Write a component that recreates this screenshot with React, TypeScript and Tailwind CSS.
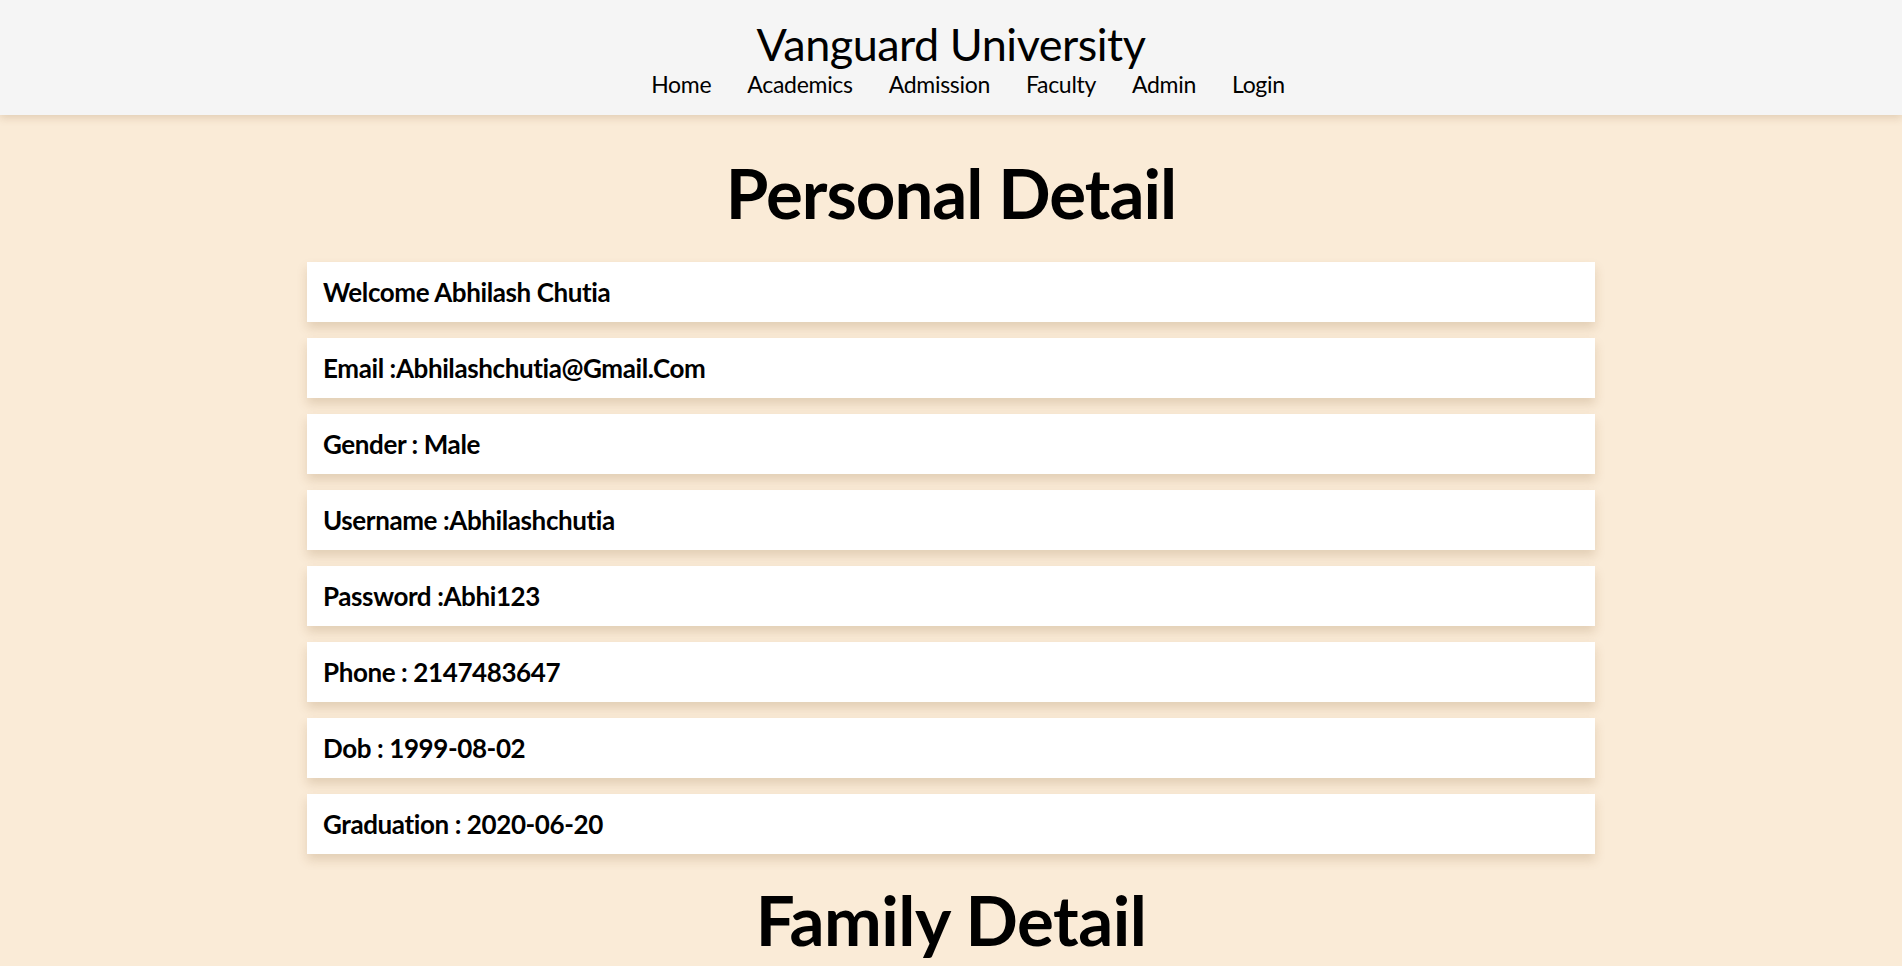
import React from "react";

const rows = [
  "Welcome Abhilash Chutia",
  "Email :Abhilashchutia@Gmail.Com",
  "Gender : Male",
  "Username :Abhilashchutia",
  "Password :Abhi123",
  "Phone : 2147483647",
  "Dob : 1999-08-02",
  "Graduation : 2020-06-20",
];

export default function App() {
  return (
    <div className="min-h-[966px] bg-[#faebd7] text-black font-['Lato','Open_Sans',sans-serif]">
      <header className="h-[115px] bg-[#f5f5f5] shadow-[0_3px_8px_rgba(120,80,30,0.18)] flex flex-col items-center pt-[17px] relative z-10">
        <h1 className="text-[45px] leading-[54px] font-normal tracking-[-0.5px]">Vanguard University</h1>
        <nav className="flex gap-[36px] text-[23px] leading-[30px] tracking-[-0.3px] -mt-[2px] pl-[34px]">
          <a>Home</a>
          <a>Academics</a>
          <a>Admission</a>
          <a>Faculty</a>
          <a>Admin</a>
          <a>Login</a>
        </nav>
      </header>
      <main className="flex flex-col items-center">
        <h2 className="mt-[38px] text-[69px] leading-[80px] font-bold tracking-[-1px]">Personal Detail</h2>
        <div className="w-[1288px] flex flex-col gap-[16px] mt-[29px]">
          {rows.map((r) => (
            <div key={r} className="h-[60px] bg-white flex items-center px-[16px] shadow-[0_6px_10px_rgba(120,80,30,0.18)]">
              <span className="text-[26px] font-bold tracking-[-0.4px]">{r}</span>
            </div>
          ))}
        </div>
        <h2 className="mt-[26px] text-[69px] leading-[80px] font-bold tracking-[-0.5px]">Family Detail</h2>
      </main>
    </div>
  );
}
